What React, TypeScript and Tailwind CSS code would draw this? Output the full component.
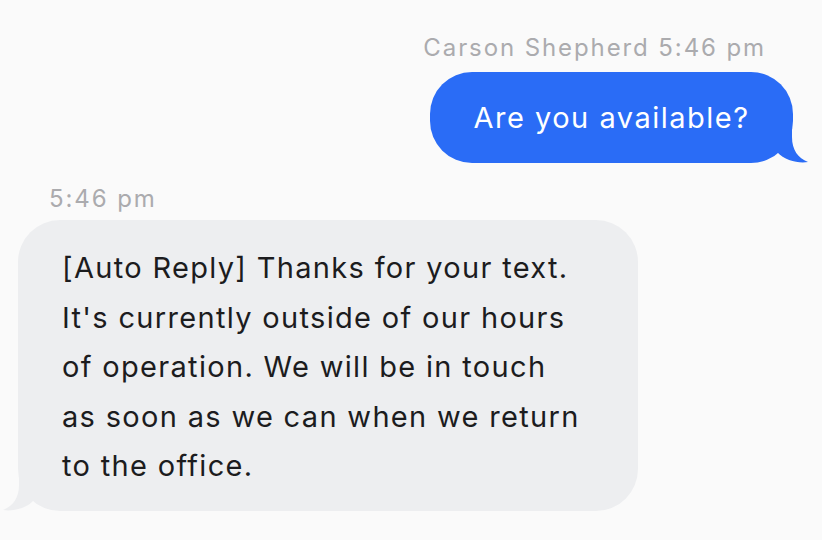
function Tail({ side, color }: { side: "left" | "right"; color: string }) {
  return (
    <svg
      width="40"
      height="44"
      viewBox="0 0 40 44"
      className={
        side === "left"
          ? "absolute -left-[16px] bottom-0 -scale-x-100"
          : "absolute -right-[16px] bottom-0"
      }
    >
      <path
        d="M23 0 L23 18 C23 31 29 39 39 43 C30 44.5 16 42 8 33 L0 33 L0 0 Z"
        fill={color}
      />
    </svg>
  );
}

export default function App() {
  return (
    <div
      className="min-h-screen w-full bg-[#fafafa] pt-[33px] text-[#1c1c1e]"
      style={{ fontFamily: "Inter, 'Noto Sans', sans-serif" }}
    >
      <div className="flex flex-col items-end pr-[29px]">
        <div className="mr-[27px] text-[24px] leading-[30px] tracking-[1.9px] text-[#ababae]">
          Carson Shepherd 5:46 pm
        </div>
        <div className="relative mt-[9px] flex h-[91px] w-[363px] items-center justify-center rounded-[42px] bg-[#2a6cf6] text-[29px] tracking-[1.5px] text-white">
          Are you available?
          <Tail side="right" color="#2a6cf6" />
        </div>
      </div>

      <div className="mt-[21px] flex flex-col items-start pl-[18px]">
        <div className="ml-[31px] text-[24px] leading-[30px] tracking-[1.9px] text-[#ababae]">
          5:46 pm
        </div>
        <div className="relative mt-[6px] w-[620px] rounded-[42px] bg-[#edeef0] pl-[44px] pt-[23px] pb-[20px] text-[29px] leading-[49.5px] tracking-[1.32px]">
          <div>[Auto Reply] Thanks for your text.</div>
          <div>It's currently outside of our hours</div>
          <div>of operation. We will be in touch</div>
          <div>as soon as we can when we return</div>
          <div>to the office.</div>
          <Tail side="left" color="#edeef0" />
        </div>
      </div>
    </div>
  );
}
